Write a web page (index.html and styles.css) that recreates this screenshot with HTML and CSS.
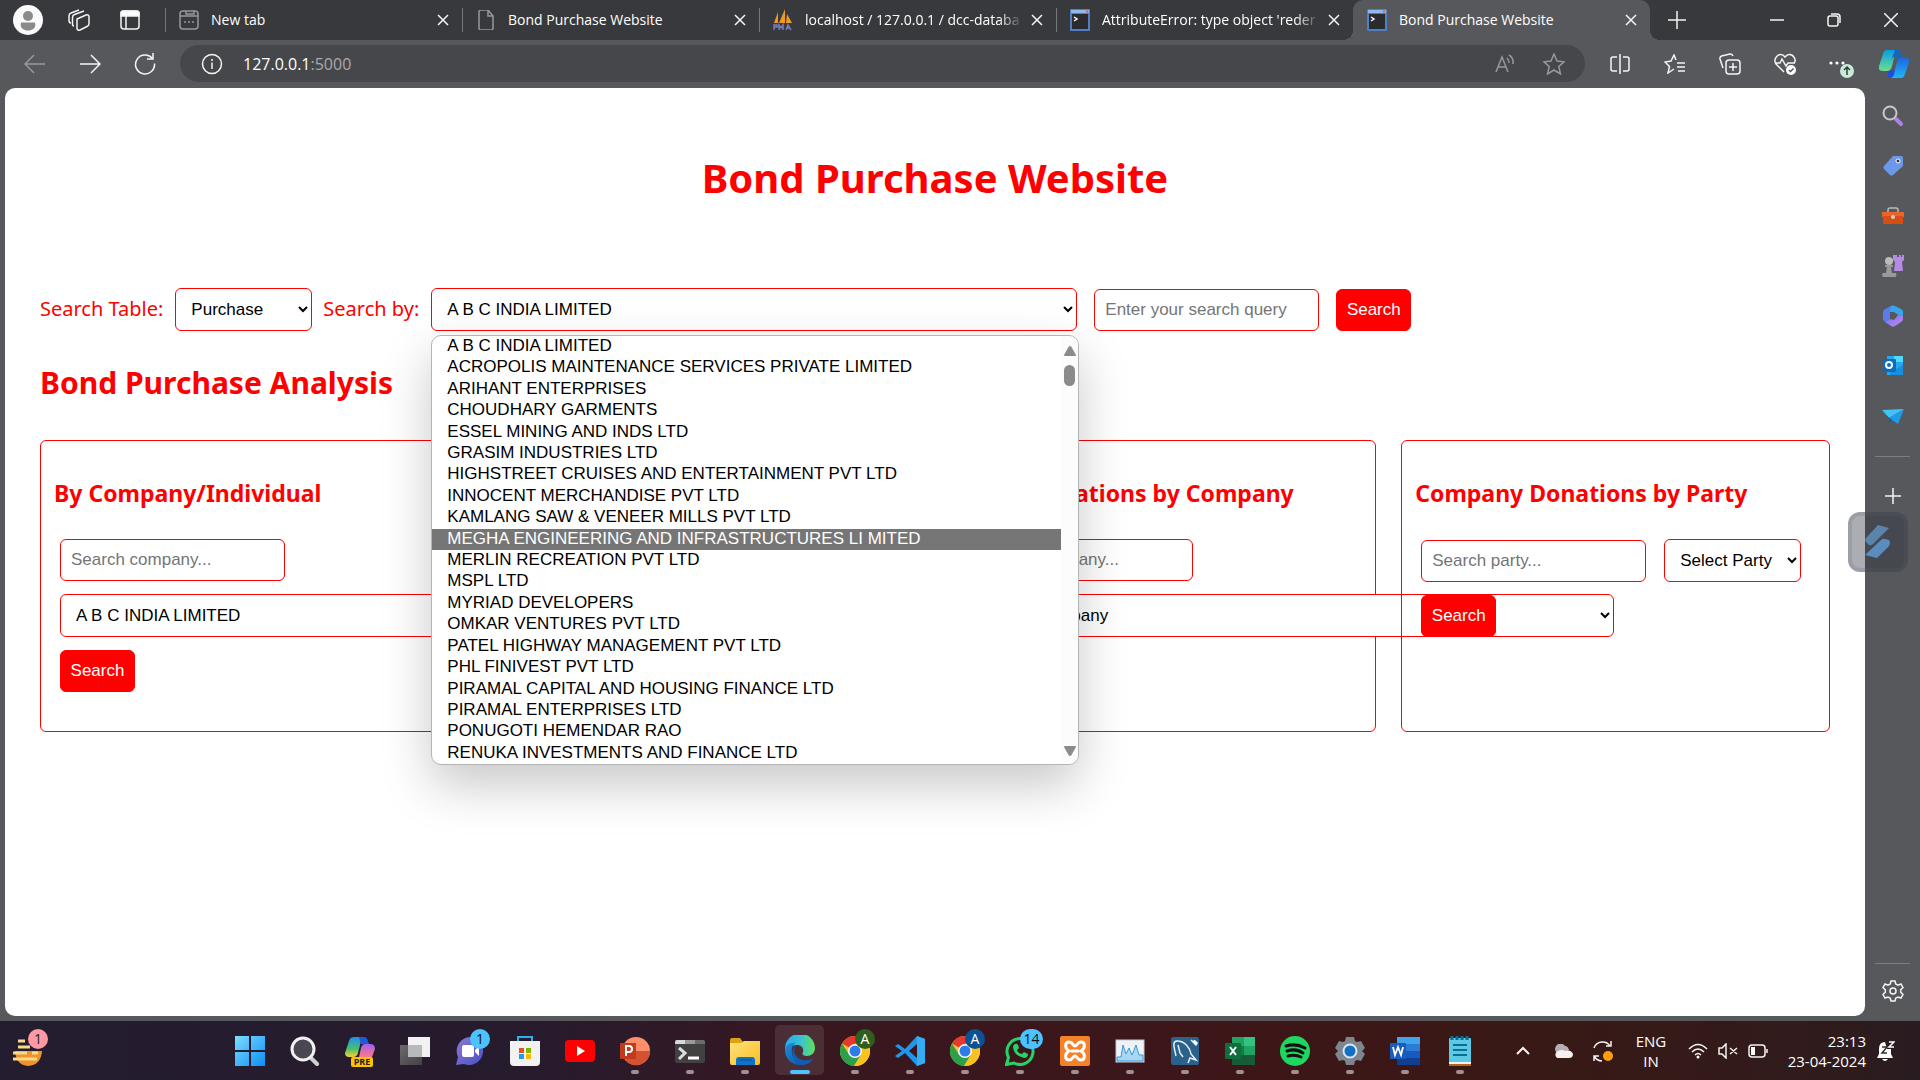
FILE: index.html
```html
<!DOCTYPE html>
<html lang="en">
<head>
<meta charset="utf-8">
<title>Bond Purchase Website</title>
<link rel="stylesheet" href="styles.css">
</head>
<body>
<svg class="defs" aria-hidden="true">
  <defs>
    <linearGradient id="win" x1="0" y1="0" x2="1" y2="1"><stop offset="0" stop-color="#7fdcff"/><stop offset="1" stop-color="#0a8ff5"/></linearGradient>
    <linearGradient id="edgeTop" x1="0" y1="0" x2="1" y2="0"><stop offset="0" stop-color="#2aa8e8"/><stop offset=".5" stop-color="#35c1d8"/><stop offset="1" stop-color="#62e05a"/></linearGradient>
    <linearGradient id="edgeLow" x1="0" y1="0" x2="1" y2="1"><stop offset="0" stop-color="#1c8fe0"/><stop offset="1" stop-color="#0c4a9c"/></linearGradient>
    <linearGradient id="copA" x1="0" y1="0" x2="0" y2="1"><stop offset="0" stop-color="#0a9be6"/><stop offset="1" stop-color="#6be08a"/></linearGradient>
    <linearGradient id="copB" x1="0" y1="0" x2="0" y2="1"><stop offset="0" stop-color="#1b63dc"/><stop offset="1" stop-color="#1fb6f7"/></linearGradient>
    <linearGradient id="copC" x1="0" y1="0" x2="0" y2="1"><stop offset="0" stop-color="#1d8ff0"/><stop offset=".6" stop-color="#4bbf6a"/><stop offset="1" stop-color="#ffd12e"/></linearGradient>
    <linearGradient id="copD" x1="0" y1="0" x2="0" y2="1"><stop offset="0" stop-color="#a45cf5"/><stop offset="1" stop-color="#ff7a80"/></linearGradient>
    <linearGradient id="chat" x1="0" y1="0" x2="1" y2="1"><stop offset="0" stop-color="#8b7bd0"/><stop offset="1" stop-color="#4a50c8"/></linearGradient>
    <linearGradient id="folder" x1="0" y1="0" x2="1" y2="1"><stop offset="0" stop-color="#ffe27a"/><stop offset="1" stop-color="#f8bd26"/></linearGradient>
    <linearGradient id="sq" x1="0" y1="0" x2="1" y2="1"><stop offset="0" stop-color="#7d7d7d"/><stop offset="1" stop-color="#4a4a4a"/></linearGradient>
    <linearGradient id="loop" x1="0" y1="0" x2="1" y2="1"><stop offset="0" stop-color="#6b6ff0"/><stop offset="1" stop-color="#c88af0"/></linearGradient>
    <symbol id="chrome" viewBox="0 0 30 30">
      <circle cx="15" cy="15" r="15" fill="#fbc21f"/>
      <path d="M15 15 2 7.500A15 15 0 0 1 28 7.500H15z" fill="#e5392f"/>
      <path d="M2 7.500A15 15 0 0 0 14 30l7-11.500H9z" fill="#2c9f4b"/>
      <path d="M28 7.500A15 15 0 0 1 14 30l7.500-11.500L22 7.500z" fill="#fbc21f"/>
      <circle cx="15" cy="15" r="7" fill="#fff"/><circle cx="15" cy="15" r="5.500" fill="#2f7bea"/>
    </symbol>
    <symbol id="console" viewBox="0 0 20 22">
      <rect width="20" height="22" rx="1" fill="#4f7fc4"/><rect x="1" y="1" width="18" height="3" fill="#8fb8ee"/><circle cx="17" cy="2.500" r="1.200" fill="#e8604c"/>
      <rect x="2" y="5" width="16" height="15" fill="#2b2b2d"/><path d="m4 8 3 2-3 2" fill="none" stroke="#fff" stroke-width="1.500"/>
    </symbol>
    <symbol id="cross" viewBox="0 0 12 12"><path d="m1 1 10 10M11 1 1 11" fill="none" stroke="#f4f4f4" stroke-width="1.500"/></symbol>
  </defs>
</svg>

<header class="tabbar">
  <div class="tab-tools">
    <button aria-label="Profile"><svg width="30" height="30" viewBox="0 0 30 30"><circle cx="15" cy="15" r="15" fill="#fafafa"/><circle cx="15" cy="11" r="5" fill="#8a8a8a"/><path d="M8 17.500h14c1.500 6-3 8-7 8s-8.500-2-7-8z" fill="#8a8a8a"/></svg></button>
    <button aria-label="Workspaces"><svg width="22" height="22" viewBox="0 0 22 22" class="line"><path d="m9 10 9-4c2-.5 3 0 3 2v7c0 1.500-1 2-2 2.500l-7 3.500c-1.500.5-3 0-3-1.500zM6 17c-1 0-1.500-1-1.500-2V8.500C4.500 7 5 6 6.500 5.500L16 2M3 14c-1.500 0-2-1-2-2.500V7c0-2 .5-2.500 2-3l8-3"/></svg></button>
    <button aria-label="Tab actions"><svg width="20" height="20" viewBox="0 0 20 20" class="line"><rect x="1" y="1" width="18" height="18" rx="3"/><path d="M1 6h18V3q0-2-2-2H3Q1 1 1 3zM6 6v13" fill="#fff"/></svg></button>
  </div>
  <nav class="tabs">
    <div class="tab"><svg width="20" height="20" viewBox="0 0 20 20" class="line dim"><rect x="1" y="1" width="18" height="18" rx="3"/><path d="M1 6h18M7 1v3h8V1M5 12h2m2 0h2m2 0h2"/></svg><span>New tab</span><button aria-label="Close tab"><svg width="12" height="12"><use href="#cross"/></svg></button></div>
    <div class="tab"><svg width="20" height="20" viewBox="0 0 20 20" class="line dim"><path d="M5 0h7l5 6v12q0 2-2 2H5q-2 0-2-2V2q0-2 2-2zm7 0v6h5"/></svg><span>Bond Purchase Website</span><button aria-label="Close tab"><svg width="12" height="12"><use href="#cross"/></svg></button></div>
    <div class="tab"><svg width="20" height="22" viewBox="0 0 20 22"><path d="M1 14 5 3v11zM6 14 12 0v14zM13 14l1-9 5 9z" fill="#f09a24"/><path d="M1 21v-5h3v2H1m5 3v-5l2 3 2-3v5m3 0 2-5 3 5m-4-2h2" fill="none" stroke="#7a7cb8" stroke-width="1.500"/></svg><span class="fade">localhost / 127.0.0.1 / dcc-databa</span><button aria-label="Close tab"><svg width="12" height="12"><use href="#cross"/></svg></button></div>
    <div class="tab"><svg width="20" height="22"><use href="#console"/></svg><span class="fade">AttributeError: type object 'reder</span><button aria-label="Close tab"><svg width="12" height="12"><use href="#cross"/></svg></button></div>
    <div class="tab active"><svg width="20" height="22"><use href="#console"/></svg><span>Bond Purchase Website</span><button aria-label="Close tab"><svg width="12" height="12"><use href="#cross"/></svg></button></div>
  </nav>
  <button class="newtab" aria-label="New tab"><svg width="18" height="18" viewBox="0 0 18 18" class="line"><path d="M9 0v18M0 9h18"/></svg></button>
  <div class="window-controls">
    <button aria-label="Minimise"><svg width="14" height="14" viewBox="0 0 14 14" class="line"><path d="M0 7h14"/></svg></button>
    <button aria-label="Restore"><svg width="14" height="14" viewBox="0 0 14 14" class="line"><rect x="1" y="3" width="10" height="10" rx="2"/><path d="M4 1h6q3 0 3 3v6"/></svg></button>
    <button aria-label="Close"><svg width="14" height="14" viewBox="0 0 14 14" class="line"><path d="m0 0 14 14M14 0 0 14"/></svg></button>
  </div>
</header>

<div class="toolbar">
  <button aria-label="Back"><svg width="22" height="20" viewBox="0 0 22 20" class="line dim"><path d="M21 10H1m9-9-9 9 9 9"/></svg></button>
  <button aria-label="Forward"><svg width="22" height="20" viewBox="0 0 22 20" class="line"><path d="M1 10h20m-9-9 9 9-9 9"/></svg></button>
  <button aria-label="Refresh"><svg width="22" height="22" viewBox="0 0 22 22" class="line"><path d="M18 5a9.500 9.500 0 1 0 2.500 5.500M19 0v6h-6"/></svg></button>
  <div class="address">
    <svg width="22" height="22" viewBox="0 0 22 22" class="line"><circle cx="11" cy="11" r="9.500"/><path d="M11 9.500V16m0-10v2" /></svg>
    <span class="url">127.0.0.1<span>:5000</span></span>
    <svg width="20" height="20" viewBox="0 0 20 20" class="line dim"><path d="M1 18 7 3l6 15M3 13h8M12 4q2 2 2 5M14 1q5 3 4 9"/></svg>
    <svg width="22" height="22" viewBox="0 0 22 22" class="line dim"><path d="m11 1 3 7 7 .8-5.200 4.700L17.500 21 11 17l-6.500 4 1.700-7.500L1 8.800 8 8z"/></svg>
  </div>
  <button aria-label="Split screen"><svg width="20" height="20" viewBox="0 0 20 20" class="line"><path d="M10 0v20M7 3H3Q1 3 1 5v10q0 2 2 2h4m6-14h4q2 0 2 2v10q0 2-2 2h-4"/></svg></button>
  <button aria-label="Favourites"><svg width="22" height="20" viewBox="0 0 22 20" class="line"><path d="M12 6 10 1 7 7l-6 1 4.500 4.500L4 19l6-4m3-6h8m-8 4h8m-7 4h7"/></svg></button>
  <button aria-label="Collections"><svg width="22" height="22" viewBox="0 0 22 22" class="line"><rect x="7" y="7" width="14" height="14" rx="3"/><path d="M14 10v8m-4-4h8M4 15 1 6q-.5-2 1.500-3L11 1q2-.5 3 2"/></svg></button>
  <button aria-label="Browser essentials"><svg width="22" height="22" viewBox="0 0 22 22" class="line"><path d="M10 19 2 11C-1 7 3 1 7 1.500q2 0 4 2.500 2-2.500 4-2.500c4-.5 8 5 5 9M1 10h5l2-4 4 7 2-3h6"/><circle cx="17" cy="17" r="5" fill="#fff" stroke="none"/><path d="m15 17 1.500 1.500 3-3" stroke="#555"/></svg></button>
  <button aria-label="Settings and more"><svg width="28" height="28" viewBox="0 0 28 28"><g fill="#fff"><circle cx="5" cy="13" r="1.600"/><circle cx="11" cy="13" r="1.600"/><circle cx="17" cy="13" r="1.600"/></g><circle cx="21" cy="21" r="7" fill="#c9ead8"/><path d="M21 25v-8m-3 3 3-3 3 3" fill="none" stroke="#30403a" stroke-width="1.500"/></svg></button>
  <button class="copilot" aria-label="Copilot"><svg width="30" height="28" viewBox="0 0 30 28"><path d="M8 0h12q-3 1-4 5l-3 11q-1 5-5 5H4q-5 0-4-5L4 4q1-4 4-4z" fill="url(#copA)"/><path d="M16 0h3q2 0 3 3l1 4h-7q-3 0-4 4z" fill="#1268b8"/><path d="M22 28H11q3-1 4-5l3-11q1-5 5-5h3q5 0 4 5l-4 12q-1 4-4 4z" fill="url(#copB)"/><path d="M8 21h3l5-1-1 4q-1 4-4 4-2 0-3-7z" fill="#1b4fe0"/></svg></button>
</div>

<div class="viewport">
  <main class="page">
    <h1>Bond Purchase Website</h1>
    <form class="search-row">
      <label for="table">Search Table:</label>
      <select id="table" class="short"><option>Purchase</option></select>
      <label for="by">Search by:</label>
      <div class="dropdown">
        <select id="by" class="long"><option>A B C INDIA LIMITED</option></select>
        <div class="popup">
          <ul role="listbox">
            <li>A B C INDIA LIMITED</li>
            <li>ACROPOLIS MAINTENANCE SERVICES PRIVATE LIMITED</li>
            <li>ARIHANT ENTERPRISES</li>
            <li>CHOUDHARY GARMENTS</li>
            <li>ESSEL MINING AND INDS LTD</li>
            <li>GRASIM INDUSTRIES LTD</li>
            <li>HIGHSTREET CRUISES AND ENTERTAINMENT PVT LTD</li>
            <li>INNOCENT MERCHANDISE PVT LTD</li>
            <li>KAMLANG SAW &amp; VENEER MILLS PVT LTD</li>
            <li class="hover">MEGHA ENGINEERING AND INFRASTRUCTURES LI MITED</li>
            <li>MERLIN RECREATION PVT LTD</li>
            <li>MSPL LTD</li>
            <li>MYRIAD DEVELOPERS</li>
            <li>OMKAR VENTURES PVT LTD</li>
            <li>PATEL HIGHWAY MANAGEMENT PVT LTD</li>
            <li>PHL FINIVEST PVT LTD</li>
            <li>PIRAMAL CAPITAL AND HOUSING FINANCE LTD</li>
            <li>PIRAMAL ENTERPRISES LTD</li>
            <li>PONUGOTI HEMENDAR RAO</li>
            <li>RENUKA INVESTMENTS AND FINANCE LTD</li>
          </ul>
          <div class="scrollbar">
            <svg width="12" height="10" viewBox="0 0 12 10"><path d="M6 0q1 0 1.500 1L12 9q0 1-1 1H1Q0 10 0 9l4.500-8Q5 0 6 0z" fill="#8b8b8b"/></svg>
            <i></i>
            <svg width="12" height="10" viewBox="0 0 12 10"><path d="M6 10q1 0 1.500-1L12 1q0-1-1-1H1Q0 0 0 1l4.500 8q.5 1 1.500 1z" fill="#8b8b8b"/></svg>
          </div>
        </div>
      </div>
      <input type="text" aria-label="Search query" placeholder="Enter your search query">
      <button type="button">Search</button>
    </form>
    <h2>Bond Purchase Analysis</h2>
    <div class="cards">
      <section class="card">
        <h3>By Company/Individual</h3>
        <form><input type="text" aria-label="Company" placeholder="Search company..."><select class="long" aria-label="Company list"><option>A B C INDIA LIMITED</option></select><button type="button">Search</button></form>
      </section>
      <section class="card"></section>
      <section class="card">
        <h3>Party Donations by Company</h3>
        <form><input type="text" aria-label="Company" placeholder="Search company..."><select class="long" aria-label="Company list"><option>Select Company</option></select></form>
      </section>
      <section class="card">
        <h3>Company Donations by Party</h3>
        <form><input type="text" aria-label="Party" placeholder="Search party..."><select class="short" aria-label="Party list"><option>Select Party</option></select><button type="button">Search</button></form>
      </section>
    </div>
  </main>
  <aside class="sidebar">
    <button aria-label="Search"><svg width="22" height="22" viewBox="0 0 22 22"><path d="m14 14 5 5" stroke="#b080e8" stroke-width="4" stroke-linecap="round"/><circle cx="8" cy="8" r="6.500" fill="none" stroke="#c8c8c8" stroke-width="2"/></svg></button>
    <button aria-label="Shopping"><svg width="22" height="22" viewBox="0 0 22 22"><path d="M11 1h8q2 0 2 2v8L11 20q-1.500 1-3 0l-6-6q-1.500-1.500 0-3z" fill="#6b98ea"/><circle cx="16" cy="6" r="2" fill="#333" stroke="#fff"/></svg></button>
    <button aria-label="Tools"><svg width="22" height="22" viewBox="0 0 22 22"><path d="M6 7V5q0-2 2-2h6q2 0 2 2v2" fill="none" stroke="#bbb" stroke-width="1.500"/><path d="M0 7h22v5H0z" fill="#e8652c"/><path d="M1 11h20v7q0 1-1 1H2q-1 0-1-1z" fill="#d84e12"/><circle cx="11" cy="12" r="2" fill="#ccc"/></svg></button>
    <button aria-label="Games"><svg width="22" height="22" viewBox="0 0 22 22"><path d="M13 0h2v2h2V0h2v2h1V0h2v5l-2 2 1 9h-9l1-9-2-2V0z" fill="#b48ae2"/><circle cx="7" cy="6" r="4" fill="#bbb"/><path d="M3 10h8v2H9l1 6h4q1 4-1 4H1q-2-2 0-4h3l1-6H3z" fill="#999"/></svg></button>
    <button aria-label="Microsoft 365"><svg width="22" height="22" viewBox="0 0 22 22"><path d="M1 7q0-2 2-3l6-3q2-1 1 1L8 6v8l-4 3-2-1q-1-1-1-2z" fill="#5b7bea"/><path d="M9 1q2-1 4 0l6 3q2 1 2 3v6L12 7H8V5z" fill="#35a6ec"/><path d="M21 11v3q0 2-2 3l-6 4q-2 1-4 0l-6-4 5-3 4 1 4-5z" fill="url(#loop)"/></svg></button>
    <button aria-label="Outlook"><svg width="22" height="22" viewBox="0 0 22 22"><path d="M5 1h16v19H5z" fill="#28a8ea"/><path d="m8 18 13-8v10H8z" fill="#1490df"/><path d="M12 1h9v6h-9z" fill="#50d9ff"/><rect x="1" y="4" width="13" height="13" rx="1" fill="#0a6cc4"/><circle cx="7" cy="10" r="3" fill="none" stroke="#fff" stroke-width="2"/></svg></button>
    <button aria-label="Drop"><svg width="22" height="22" viewBox="0 0 22 22"><path d="M0 5 22 4 7 13z" fill="#41c4f5"/><path d="m22 4-6 15-9-6z" fill="#1e9ce8"/><path d="M3 9l4 4v6l3-4z" fill="#0b62a8"/></svg></button>
    <hr>
    <button aria-label="Customise"><svg width="16" height="16" viewBox="0 0 16 16" class="line"><path d="M8 0v16M0 8h16"/></svg></button>
    <div class="floater"><svg width="26" height="34" viewBox="0 0 26 34"><path d="m13 0 11 3L8 19q-2 2-4 1l-3-3q-2-2 1-5z" fill="#5b84ad"/><path d="M12 33 0 30l16-15q2-2 4-1l4 1q2 2 0 6z" fill="#5b8cc0"/></svg></div>
    <hr class="low">
    <button aria-label="Settings"><svg width="22" height="22" viewBox="0 0 22 22" class="line"><path d="M9 1h4l.7 3 2.300 1.200L19 4l2 3.500-2.300 2.200v2.600L21 14.500 19 18l-3-1-2.300 1.200L13 21H9l-.7-2.800L6 17l-3 1-2-3.500 2.300-2.200V9.700L1 7.500 3 4l3 1.200L8.300 4z"/><circle cx="11" cy="11" r="3"/></svg></button>
  </aside>
</div>

<footer class="taskbar">
  <button class="widgets" aria-label="Widgets"><svg width="30" height="30" viewBox="0 0 30 30"><path d="M2 15q1 14 13 15 13-1 14-15z" fill="#f0932a"/><path d="M5 5h7M5 11h12M0 17h14M0 23h24M19 17h6" stroke="#f7d98a" stroke-width="3"/></svg><b class="badge pink">1</b></button>
  <div class="apps">
    <button aria-label="Start"><svg width="30" height="30" viewBox="0 0 30 30"><path d="M0 0h14v14H0zM16 0h14v14H16zM0 16h14v14H0zM16 16h14v14H16z" fill="url(#win)"/></svg></button>
    <button aria-label="Search"><svg width="30" height="30" viewBox="0 0 30 30"><path d="m19 20 8 8" stroke="#d0d0d0" stroke-width="4" stroke-linecap="round"/><circle cx="13" cy="13" r="11" fill="#4a4652" stroke="#f2f2f2" stroke-width="3"/></svg></button>
    <button aria-label="Copilot"><svg width="30" height="30" viewBox="0 0 30 30"><path d="M9 1h11q-4 2-5 8l-2 8q-1 4-5 4H4q-4 0-4-4L4 5q1-4 5-4z" fill="url(#copC)"/><path d="M14 1h5q3 0 4 4l1 3h-8z" fill="#2257d8"/><path d="M20 8h5q5 0 5 5l-3 8H14l2-9q1-4 4-4z" fill="url(#copD)"/></svg><em>PRE</em></button>
    <button aria-label="Task view"><svg width="30" height="30" viewBox="0 0 30 30"><rect x="8" y="1" width="22" height="20" fill="#f2f2f2"/><rect y="9" width="22" height="20" fill="url(#sq)" opacity=".8"/><path d="M8 9h14v12H8z" fill="#b9b9b9"/></svg></button>
    <button aria-label="Chat"><svg width="30" height="30" viewBox="0 0 30 30"><path d="M15 1a14 14 0 1 1-6 27l-8 1 2-8A14 14 0 0 1 15 1z" fill="url(#chat)"/><rect x="7" y="9" width="12" height="12" rx="2" fill="#fff"/><path d="m20 14 4-4v10l-4-4z" fill="#fff"/></svg><b class="badge blue">1</b></button>
    <button aria-label="Store"><svg width="30" height="30" viewBox="0 0 30 30"><path d="M8 7V1h14v6" fill="none" stroke="#2cb0ee" stroke-width="2"/><path d="M0 5h30v21q0 4-4 4H4q-4 0-4-4z" fill="#f2f2f2"/><path d="M9 12h5v5H9z" fill="#e94f24"/><path d="M16 12h5v5h-5z" fill="#7cb900"/><path d="M9 18h5v5H9z" fill="#1ba0e8"/><path d="M16 18h5v5h-5z" fill="#fbb800"/></svg></button>
    <button aria-label="YouTube"><svg width="30" height="30" viewBox="0 0 30 30"><rect y="4" width="30" height="22" rx="4" fill="#f00"/><path d="m12 10 8 5-8 5z" fill="#fff"/></svg></button>
    <button class="run" aria-label="PowerPoint"><svg width="30" height="30" viewBox="0 0 30 30"><circle cx="16" cy="15" r="14" fill="#ff8f6b"/><path d="M16 15h14a14 14 0 0 1-25 9z" fill="#d35230"/><rect y="7" width="16" height="16" rx="1" fill="#c13a1c"/><path d="M6 20V10h3a3 3 0 0 1 0 6H6" fill="none" stroke="#fff" stroke-width="2"/></svg></button>
    <button class="run" aria-label="Terminal"><svg width="30" height="30" viewBox="0 0 30 30"><rect y="4" width="30" height="23" rx="2" fill="#414141"/><path d="M0 8V6q0-2 2-2h8v4z" fill="#d8d8d8"/><path d="M10 4h10v4H10z" fill="#9a9a9a"/><path d="M20 4h8q2 0 2 2v2H20z" fill="#6c6c6c"/><path d="m4 12 6 5-6 6" fill="none" stroke="#ddd" stroke-width="3"/><path d="M13 22h11" stroke="#fff" stroke-width="3"/></svg></button>
    <button class="run" aria-label="Explorer"><svg width="30" height="30" viewBox="0 0 30 30"><path d="M0 4q0-2 2-2h8l3 4v5H0z" fill="#e0a010"/><path d="M0 7h11l3-2h16v22q0 2-2 2H2q-2 0-2-2z" fill="url(#folder)"/><path d="M6 29v-5q0-3 3-3h13q3 0 3 3v5z" fill="#1173c8"/><path d="M9 24h13" stroke="#0c4f94"/></svg></button>
    <button class="run current" aria-label="Edge"><svg width="30" height="30" viewBox="0 0 30 30"><path d="M0 14A15 15 0 0 1 30 13c0 5-4 8-8 8-5 0-5-2-4-4 1-3-1-7-6-7-6 0-12 3-12 8z" fill="url(#edgeTop)"/><path d="M0 15c0-5 6-8 11-7-6 2-7 17 6 19 4 1 8 0 10-3-3 5-8 6-12 6C6 30 0 23 0 15z" fill="url(#edgeLow)"/><path d="M11 10q-3 4-1 9c3 7 13 8 18 4-2 5-7 7-11 7C8 28 4 15 11 10z" fill="#0f5db4"/></svg></button>
    <button class="run" aria-label="Chrome"><svg width="30" height="30"><use href="#chrome"/></svg><b class="badge green">A</b></button>
    <button class="run" aria-label="VS Code"><svg width="30" height="30" viewBox="0 0 30 30"><path d="m22 0 8 3v24l-8 3L10 17l-7 5-3-2 7-5-7-5 3-2 7 5zm0 8-8 7 8 7z" fill="#2196e8"/><path d="m22 0 8 3v24l-8 3z" fill="#35adf5"/></svg></button>
    <button class="run" aria-label="Chrome, second profile"><svg width="30" height="30"><use href="#chrome"/></svg><b class="badge navy">A</b></button>
    <button class="run" aria-label="WhatsApp"><svg width="30" height="30" viewBox="0 0 30 30"><path d="m1.500 28.500 2-7A13 13 0 1 1 9 27z" fill="none" stroke="#25d366" stroke-width="3"/><path d="M10 8q2-1 3 1l1 3-2 2q1 3 5 4l2-2 4 2q0 4-4 4Q9 20 8 11q0-2 2-3z" fill="#25d366"/></svg><b class="badge blue wide">14</b></button>
    <button class="run" aria-label="XAMPP"><svg width="30" height="30" viewBox="0 0 30 30"><rect width="30" height="30" rx="2" fill="#f5822a"/><path d="M9 15C4 12 5 6 9 6s4 4 6 4 2-4 6-4 5 6 0 9c5 3 4 9 0 9s-4-4-6-4-2 4-6 4-5-6 0-9zM11 15h8" fill="none" stroke="#fff" stroke-width="3"/></svg></button>
    <button class="run" aria-label="Monitor"><svg width="30" height="30" viewBox="0 0 30 30"><rect x="1" y="4" width="28" height="22" fill="#eef3f7" stroke="#c5c9cc"/><path d="M2 21h4l2-12 3 9 3-6 3 7 4-10 3 10 4 0v6H2z" fill="#a8d6f5" stroke="#3a98d8"/></svg></button>
    <button class="run" aria-label="MySQL Workbench"><svg width="30" height="30" viewBox="0 0 30 30"><rect x="1" y="1" width="28" height="28" rx="2" fill="#2a628c"/><path d="M6 20C4 11 2 5 7 5c8 0 13 7 14 13l5 6-6-2-2 5M8 9l2 8 3 4M21 4l5 5" fill="none" stroke="#e6eef4" stroke-width="1.500"/><path d="m22 5 4 5 2-3-3-3z" fill="#fff"/></svg></button>
    <button class="run" aria-label="Excel"><svg width="30" height="30" viewBox="0 0 30 30"><path d="M7 1h23v28H7z" fill="#185c37"/><path d="M7 1h12v9H7z" fill="#21a366"/><path d="M19 1h11v9H19z" fill="#33c481"/><path d="M19 10h11v9H19z" fill="#21a366"/><path d="M7 10h12v9H7z" fill="#107c41"/><rect y="7" width="16" height="16" rx="1" fill="#0f6e3a"/><path d="m5 11 6 8m0-8-6 8" stroke="#fff" stroke-width="2"/></svg></button>
    <button class="run" aria-label="Spotify"><svg width="30" height="30" viewBox="0 0 30 30"><circle cx="15" cy="15" r="15" fill="#1ed760"/><path d="M6 10q10-3 19 2M7 15q9-3 16 2M8 20q7-2 13 1" fill="none" stroke="#111" stroke-width="3" stroke-linecap="round"/></svg></button>
    <button class="run" aria-label="Settings"><svg width="30" height="30" viewBox="0 0 30 30"><path d="M11 1h8l1 4 2 1 4-1 4 7-3 3 3 3-4 7-4-1-2 1-1 4h-8l-1-4-2-1-4 1-4-7 3-3-3-3 4-7 4 1 2-1z" fill="#7d868e"/><circle cx="15" cy="15" r="6.500" fill="#1172c4" stroke="#dce6ee" stroke-width="2"/></svg></button>
    <button class="run" aria-label="Word"><svg width="30" height="30" viewBox="0 0 30 30"><path d="M7 1h23v7H7z" fill="#41a5ee"/><path d="M7 8h23v7H7z" fill="#2b7cd3"/><path d="M7 15h23v7H7z" fill="#185abd"/><path d="M7 22h23v7H7z" fill="#103f91"/><rect y="7" width="16" height="16" rx="1" fill="#1c5bbe"/><path d="m3 11 2 8 3-8 3 8 2-8" fill="none" stroke="#fff" stroke-width="1.800"/></svg></button>
    <button class="run" aria-label="Notepad"><svg width="30" height="30" viewBox="0 0 30 30"><rect x="4" y="2" width="22" height="26" rx="1" fill="#5cc8e4"/><path d="M4 28h22v2H4z" fill="#b5651d"/><path d="M4 26h22v2H4z" fill="#f4f4f4"/><path d="M8 9h14M8 14h14M8 19h14" stroke="#0d6e94" stroke-width="2"/><path d="M7 0v4m5-4v4m5-4v4m5-4v4" stroke="#0d6e94" stroke-width="3"/></svg></button>
  </div>
  <div class="tray">
    <button aria-label="Hidden icons"><svg width="14" height="10" viewBox="0 0 14 10" class="line thick"><path d="m1 8 6-6 6 6"/></svg></button>
    <button aria-label="OneDrive"><svg width="20" height="14" viewBox="0 0 20 14"><path d="M3 8a5 5 0 0 1 9-6q3 0 4 4l-9 7H4z" fill="#b8aeb0"/><path d="M4 14a4 4 0 0 1 1-7q4-2 7 0 6-2 8 3 0 4-4 4z" fill="#f4f0f0"/></svg></button>
    <button aria-label="Updates"><svg width="20" height="22" viewBox="0 0 20 22" class="line"><path d="M1 8A9 9 0 0 1 17 6m1-5v5h-5M1 21v-5h5M1 16q3 5 8 5"/><circle cx="15" cy="16" r="5" fill="#ff9d0a" stroke="none"/></svg></button>
    <div class="lang">ENG<br>IN</div>
    <button class="narrow" aria-label="Wi-Fi"><svg width="20" height="16" viewBox="0 0 20 16" class="line"><path d="M1 6q9-9 18 0M4 9q6-6 12 0M7 12q3-3 6 0"/><circle cx="10" cy="14" r="1.500" fill="#fff" stroke="none"/></svg></button>
    <button class="narrow" aria-label="Volume"><svg width="20" height="16" viewBox="0 0 20 16" class="line"><path d="M1 5h3l4-4v14l-4-4H1zM12 5l7 6m0-6-7 6"/></svg></button>
    <button class="narrow" aria-label="Battery"><svg width="20" height="14" viewBox="0 0 20 14" class="line"><rect x="1" y="1" width="16" height="12" rx="3"/><path d="M19 5v4"/><path d="M3 3h4v8H3z" fill="#fff" stroke="none"/></svg></button>
    <div class="clock">23:13<br>23-04-2024</div>
    <button aria-label="Notifications"><svg width="18" height="20" viewBox="0 0 18 20"><path d="M8 1q-6 0-6 7v5l-2 4h16l-2-4V8h-4zM5 18h6q-3 4-6 0z" fill="#fff"/><path d="M5 6h5l-5 6h5" fill="none" stroke="#332" stroke-width="1.500"/><path d="M12 1h5l-5 5h5" fill="none" stroke="#fff" stroke-width="1.500"/></svg></button>
  </div>
</footer>
</body>
</html>
```
FILE: styles.css
```css
* { box-sizing: border-box; }

body {
  margin: 0;
  min-height: 100vh;
  display: flex;
  flex-direction: column;
  background: #57585c;
  font-family: "Noto Sans", sans-serif;
  overflow-x: hidden;
}

button { font: inherit; color: inherit; }
svg { display: block; flex: none; }
.defs { position: absolute; width: 0; height: 0; }
.line { fill: none; stroke: #f4f4f4; stroke-width: 1.5; }
.line.dim { stroke: #97989b; }
.line.thick { stroke-width: 2; }

.tabbar button, .toolbar button, .sidebar button, .taskbar button {
  display: flex;
  align-items: center;
  justify-content: center;
  flex: none;
  padding: 0;
  border: 0;
  background: none;
  color: #fff;
}

/* Tab strip */
.tabbar {
  display: flex;
  height: 40px;
  background: #38393c;
  color: #fff;
  font: 14px/20px "Open Sans", sans-serif;
}
.tab-tools { display: flex; padding-left: 2px; margin-right: 10px; }
.tab-tools button { width: 51px; }
.tabs { display: flex; min-width: 0; }
.tab {
  position: relative;
  display: flex;
  align-items: center;
  gap: 12px;
  width: 297px;
  padding: 0 11px 0 14px;
}
.tab:not(.active)::before {
  content: "";
  position: absolute;
  left: 0;
  top: 8px;
  height: 24px;
  border-left: 1px solid #77787b;
}
.tab span { flex: 1; overflow: hidden; white-space: nowrap; }
.tab .fade { margin-right: -6px; mask-image: linear-gradient(to left, transparent, #000 24px); }
.tab button { width: 16px; }
.tab.active { background: #57585c; border-radius: 10px 10px 0 0; }
.tab.active::before, .tab.active::after {
  content: "";
  position: absolute;
  bottom: 0;
  width: 10px;
  height: 10px;
}
.tab.active::before { left: -10px; background: radial-gradient(circle at 0 0, transparent 10px, #57585c 10px); }
.tab.active::after { right: -10px; background: radial-gradient(circle at 100% 0, transparent 10px, #57585c 10px); }
.tabbar .newtab { width: 54px; }
.window-controls { display: flex; margin-left: auto; padding-right: 1px; }
.window-controls button { width: 57px; }

/* Toolbar */
.toolbar { display: flex; height: 48px; padding-left: 7px; }
.toolbar button { width: 55px; }
.toolbar .copilot { width: 53px; }
.address {
  flex: 1;
  display: flex;
  align-items: center;
  gap: 20px;
  margin: 5px 7px 6px 8px;
  padding: 0 20px 0 21px;
  border-radius: 19px;
  background: #46474a;
}
.address svg:nth-of-type(2) { margin-right: 8px; }
.url { flex: 1; color: #fff; font: 16px/24px "Open Sans", sans-serif; }
.url span { color: #a9aaac; }

/* Page and side bar */
.viewport { flex: 1; display: flex; padding: 0 0 5px 5px; }
.page {
  flex: 1;
  min-width: 0;
  padding: 0 35px;
  border-radius: 10px;
  background: #fff;
  color: #f00;
  font-size: 20px;
  line-height: 27px;
}
h1 { margin: 62px 0 76px; font-size: 40px; line-height: 56px; text-align: center; }
h2 { margin: 25px 0 36px; font-size: 30px; line-height: 42px; }
h3 { margin: 24px 0 24px; font-size: 23px; line-height: 32px; }

.search-row { display: flex; align-items: center; gap: 5px; }
.search-row label { padding: 0 1px 2px 0; }
.page input, .page select, .page form > button {
  flex: none;
  margin: 6px;
  border: 1px solid #f00;
  border-radius: 6px;
  background: #fff;
  font: 17px/20px "Liberation Sans", Arial, sans-serif;
}
.page input { width: 225px; height: 42px; padding: 0 10px; }
.page input::placeholder { color: #757575; }
.page select { height: 43px; padding: 0 0 0 11px; color: #000; }
.page .short { width: 137px; }
.page .long { width: 646px; }
.page form > button { width: 75px; height: 42px; padding: 0; background: #f00; color: #fff; }

.dropdown { position: relative; display: flex; }
.popup {
  position: absolute;
  z-index: 2;
  top: 53px;
  left: 6px;
  display: flex;
  width: 648px;
  height: 430px;
  border: 1px solid #b4b4b4;
  border-radius: 10px;
  overflow: hidden;
  background: #fff;
  color: #000;
  font: 17px/19px "Liberation Sans", Arial, sans-serif;
  box-shadow: 0 20px 50px rgba(0, 0, 0, .22);
}
.popup ul { flex: 1; display: flex; flex-direction: column; margin: 0; padding: 0; list-style: none; }
.popup li { flex: 1; padding-left: 15px; white-space: nowrap; }
.popup .hover { background: #767676; color: #fff; }
.scrollbar {
  display: flex;
  flex-direction: column;
  align-items: center;
  width: 17px;
  padding: 10px 0 8px;
  background: #fcfcfc;
}
.scrollbar i { width: 11px; height: 21px; margin: 9px 0 auto; border-radius: 6px; background: #8b8b8b; }

.cards { display: grid; grid-template-columns: repeat(4, 1fr); gap: 25px; }
.card { min-width: 0; padding: 12px 13px; border: 1px solid #f00; border-radius: 6px; }
.card form { display: flex; flex-wrap: wrap; align-items: center; gap: 1px 6px; margin-bottom: 21px; }

.sidebar { width: 55px; display: flex; flex-direction: column; align-items: center; padding-top: 3px; }
.sidebar button { width: 40px; height: 50px; }
.sidebar hr { width: 35px; margin: 15px 0 14px; border: 0; border-top: 1px solid #7c7d80; }
.floater {
  display: flex;
  align-items: center;
  justify-content: center;
  align-self: flex-end;
  width: 60px;
  height: 60px;
  margin: -9px 12px 0 0;
  border: 4px solid rgba(90, 94, 106, .2);
  border-radius: 12px;
  background: rgba(44, 49, 62, .4);
}
.sidebar .low { margin: auto 0 2px; }

/* Taskbar */
.taskbar {
  display: flex;
  height: 59px;
  background: linear-gradient(90deg, #231d2f, #271b2d 28%, #381720 42%, #3d1618 65%, #381915 80%, #301b1c 95%, #281c20);
  color: #fff;
  font: 15px/20px "Open Sans", sans-serif;
}
.taskbar button { position: relative; }
.widgets { width: 56px; }
.apps { display: flex; margin-left: auto; }
.apps button { width: 55px; }
.run::after {
  content: "";
  position: absolute;
  bottom: 6px;
  width: 8px;
  height: 4px;
  border-radius: 2px;
  background: #a09094;
}
.taskbar .current { width: 49px; margin: 4px 3px 5px; border-radius: 5px; background: rgba(255, 255, 255, .1); }
.current::after { bottom: 1px; width: 20px; background: #4cc2ff; }
.badge {
  position: absolute;
  top: 8px;
  left: 28px;
  width: 20px;
  height: 20px;
  border-radius: 10px;
  font-weight: 400;
  font-size: 14px;
  text-align: center;
}
.pink { background: #ff99a4; color: #222; }
.blue { background: #4cc2ff; color: #111; }
.wide { width: 23px; }
.green { background: #2f5f20; }
.navy { background: #0b5294; }
.apps em {
  position: absolute;
  left: 19px;
  top: 36px;
  width: 22px;
  border-radius: 2px;
  background: #ffc400;
  color: #222;
  font: bold 9px/10px "Open Sans", sans-serif;
}
.tray { display: flex; align-items: center; padding: 0 14px 0 16px; }
.tray button { width: 40px; }
.tray .narrow { width: 30px; }
.lang { width: 60px; padding-right: 4px; text-align: center; }
.clock { width: 93px; text-align: right; }
```
